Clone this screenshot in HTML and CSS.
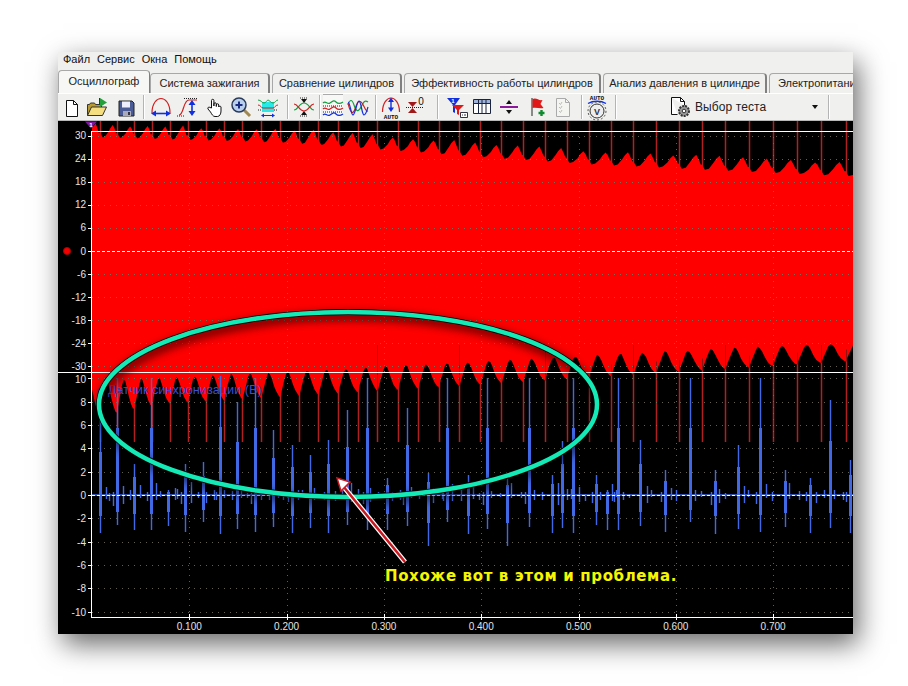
FILE: index.html
```html
<!DOCTYPE html>
<html lang="ru">
<head>
<meta charset="utf-8">
<title>Осциллограф</title>
<link rel="stylesheet" href="styles.css">
</head>
<body>
<div class="window">
  <nav class="menu"><span>Файл</span><span>Сервис</span><span>Окна</span><span>Помощь</span></nav>
  <div class="tabs">
    <div class="tab active t1">Осциллограф</div>
    <div class="tab t2">Система зажигания</div>
    <div class="tab t3">Сравнение цилиндров</div>
    <div class="tab t4">Эффективность работы цилиндров</div>
    <div class="tab t5">Анализ давления в цилиндре</div>
    <div class="tab t6">Электропитание</div>
  </div>
  <div class="toolbar">
    <div class="tool w26"><svg width="24" height="24" viewBox="0 0 24 24"><path d="M6.500 5.500h7l4 4v12h-11z" fill="#fff" stroke="#111"/><path d="M13.500 5.500v4h4" fill="none" stroke="#111"/></svg></div>
    <div class="tool w26"><svg width="28" height="24" viewBox="0 0 28 24"><path d="M3.500 20.500v-11h2l1-1.500h4l1 1.500h6v3" fill="#b89a30" stroke="#333"/><path d="M3.500 20.500l4-8.500h15l-4 8.500z" fill="#f4de80" stroke="#333"/><path d="M16 3l7 4.500-7 4.500z" fill="#22a03a"/><path d="M15.500 3v7" stroke="#333"/></svg></div>
    <div class="tool w30"><svg width="24" height="24" viewBox="0 0 24 24"><path d="M5 6h13l2 2v13H5z" fill="#4a5b96" stroke="#222"/><path d="M8 6.500h8v6H8z" fill="#eef"/><path d="M9 16h8v5H9z" fill="#aab"/><path d="M14 17h2v3h-2z" fill="#334"/></svg></div>
    <i class="sep"></i>
    <div class="tool w28"><svg width="26" height="24" viewBox="0 0 26 24"><path d="M4 18C4 8 9 3.500 13 3.500S22 8 22 18" fill="none" stroke="#d02020" stroke-width="1.200"/><path d="M7 18.500h12" stroke="#1030e0" stroke-width="1.600"/><path d="M3 18.500l5-3v6zM23 18.500l-5-3v6z" fill="#1030e0"/></svg></div>
    <div class="tool w26"><svg width="26" height="24" viewBox="0 0 26 24"><path d="M4 20c5 0 4-15 10-15h8" fill="none" stroke="#d02020" stroke-width="1.200"/><path d="M2 21h8M9 3.500h13" stroke="#222" stroke-dasharray="1 1"/><path d="M17 7v12" stroke="#1030e0" stroke-width="1.600"/><path d="M17 5l-3.500 5h7zM17 21l-3.500-5h7z" fill="#1030e0"/></svg></div>
    <div class="tool w30"><svg width="22" height="24" viewBox="0 0 22 24"><path d="M6.500 13V5.500a1.200 1.200 0 0 1 2.400 0V11V9a1.200 1.200 0 0 1 2.400 0v2.500V10a1.200 1.200 0 0 1 2.400 0v2a1.200 1.200 0 0 1 2.300 0v4c0 3-1.500 5.500-3.500 5.500H10c-2 0-3-2-4.500-4.500L3 14c-.8-1.500 1-2.500 2-1.500z" fill="#fff" stroke="#111"/></svg></div>
    <div class="tool w20"><svg width="24" height="24" viewBox="0 0 24 24"><path d="M15 15l6 6" stroke="#a08850" stroke-width="3"/><circle cx="10" cy="10" r="7" fill="#b8d0ee" stroke="#2a3a5a" stroke-width="1.500"/><path d="M6.500 10h7M10 6.500v7" stroke="#1a2a80" stroke-width="2"/></svg></div>
    <div class="tool w34"><svg width="24" height="24" viewBox="0 0 24 24"><path d="M6 7h12v10H6z" fill="#28e8e8"/><path d="M2 5c3 0 4 3 6 3s3-3 4-3 3 3 5 3 3-3 5-3" fill="none" stroke="#10a040"/><path d="M2 10c3 0 3 3 5 3h10c2 0 2-3 5-3" fill="none" stroke="#d02020"/><path d="M6 20.500h12" stroke="#1030e0"/><path d="M5 20.500l3-2v4zM19 20.500l-3-2v4z" fill="#1030e0"/><path d="M2 15h4M18 15h4" stroke="#222" stroke-dasharray="1 1"/></svg></div>
    <i class="sep"></i>
    <div class="tool w26"><svg width="24" height="24" viewBox="0 0 24 24"><path d="M2 15c4 0 5-7 10-7s6 7 10 7" fill="none" stroke="#10a040" stroke-width="1.200"/><path d="M2 9c4 0 5 7 10 7s6-7 10-7" fill="none" stroke="#d02020" stroke-width="1.200"/><path d="M12 8l-3-4h6zM12 16l-3 4h6z" fill="#111"/><path d="M8 3h8M8 21h8" stroke="#222" stroke-dasharray="1 1"/></svg></div>
    <i class="sep"></i>
    <div class="tool w20 pressed"><svg width="22" height="24" viewBox="0 0 22 24"><path d="M1 7c3-3 4 2 7 0s4-3 6-1 4 2 7 0" fill="none" stroke="#10a040" stroke-width="1.200"/><path d="M1 13c3-3 4 2 7 0s4-3 6-1 4 2 7 0" fill="none" stroke="#d02020" stroke-width="1.200"/><path d="M1 19c3-3 4 2 7 0s4-3 6-1 4 2 7 0" fill="none" stroke="#1030e0" stroke-width="1.200"/><path d="M1 10h20M1 16h20" stroke="#222" stroke-dasharray="1 1"/></svg></div>
    <div class="tool w30"><svg width="22" height="24" viewBox="0 0 22 24"><path d="M1 10c2-6 4-6 6 0s4 8 7 2 4-7 7-5" fill="none" stroke="#10a040" stroke-width="1.200"/><path d="M1 8c2 10 5 12 7 6s3-9 6-7 4 10 7 9" fill="none" stroke="#d02020" stroke-width="1.200"/><path d="M1 7c2 0 3 13 5 13s4-14 6-14 3 14 5 14 3-5 4-8" fill="none" stroke="#1030e0" stroke-width="1.200"/></svg></div>
    <i class="sep"></i>
    <div class="tool w24"><svg width="24" height="26" viewBox="0 0 24 26"><path d="M3.500 18C3.500 9 8 4 12 4s8.500 5 8.500 14" fill="none" stroke="#d02020" stroke-width="1.200"/><path d="M12 6v10" stroke="#1030e0" stroke-width="1.400"/><path d="M12 3.500l-3 4.500h6zM12 18l-3-4.500h6z" fill="#1030e0"/><text x="12" y="24.500" class="icon-text">AUTO</text></svg></div>
    <div class="tool w24"><svg width="24" height="24" viewBox="0 0 24 24"><path d="M3 12.500h18" stroke="#222" stroke-dasharray="1 1"/><path d="M5 7h9l-4.500 5z" fill="#a01818"/><path d="M5 18h9l-4.500-5z" fill="#a01818"/><text x="18" y="10" class="icon-zero">0</text></svg></div>
    <i class="sep sep-wide"></i>
    <div class="tool w32"><svg width="22" height="24" viewBox="0 0 22 24"><path d="M1 3h13l-5 7v8l-2-1v-7z" fill="#1030e0"/><path d="M6 10h12l-5 5v5l-2-1v-4z" fill="#e01818"/><text x="7" y="8" class="icon-num">1</text><path d="M14.500 17.500h7v5h-7z" fill="#fff" stroke="#334"/><path d="M16 20h1M18 20h2" stroke="#334"/></svg></div>
    <div class="tool w18"><svg width="22" height="24" viewBox="0 0 22 24"><path d="M2.500 4.500h17v14h-17z" fill="#fff" stroke="#1a2440"/><path d="M3 5h16v3H3z" fill="#9fb4dc"/><path d="M2.500 8.500h17M7.500 4.500v14M11 4.500v14M15 4.500v14" stroke="#1a2440"/></svg></div>
    <div class="tool w36"><svg width="22" height="24" viewBox="0 0 22 24"><path d="M2 12h18" stroke="#8a1a9a" stroke-width="2"/><path d="M11 5l-3 4h6zM11 19l-3-4h6z" fill="#111"/></svg></div>
    <div class="tool w20"><svg width="22" height="24" viewBox="0 0 22 24"><path d="M6 3v18" stroke="#222"/><path d="M6.500 4c4-2 6 2 10 1l-2 4 3 4c-4 1-7-1-11 0z" fill="#e01818"/><path d="M15.500 15v6M12.500 18h6" stroke="#108a30" stroke-width="2.400"/></svg></div>
    <div class="tool w32"><svg width="22" height="24" viewBox="0 0 22 24"><path d="M4.500 3.500h9l4 4v14h-13z" fill="#f4f4f0" stroke="#aaa"/><path d="M13.500 3.500v4h4" fill="none" stroke="#aaa"/><path d="M7 8l1.500 1.500L10 7M7 12l1.500 1.500L10 11M7 16l1.500 1.500L10 15" fill="none" stroke="#bbb"/></svg></div>
    <i class="sep"></i>
    <div class="tool w24"><svg width="26" height="28" viewBox="0 0 26 28"><text x="13" y="7" class="icon-text">AUTO</text><path d="M4 10.500c5-3 13-3 18 0" fill="none" stroke="#1030e0" stroke-width="1.400"/><circle cx="13" cy="18" r="7" fill="#eee" stroke="#333"/><circle cx="13" cy="18" r="9" fill="none" stroke="#555" stroke-dasharray="2 2"/><text x="13" y="21.500" class="icon-v">V</text></svg></div>
    <i class="sep sep-mid"></i>
    <div class="select">
      <svg width="24" height="24" viewBox="0 0 24 24"><path d="M2.500 2.500h9l4 4v4M2.500 2.500v17h6" fill="#fff" stroke="#111"/><path d="M11.500 2.500v4h4" fill="none" stroke="#111"/><circle cx="15" cy="16" r="5" fill="#999" stroke="#333" stroke-width="2" stroke-dasharray="2 1"/><circle cx="15" cy="16" r="1.800" fill="#fff" stroke="#333"/></svg>
      <span class="select-label">Выбор теста</span>
      <i class="caret"></i>
    </div>
    <i class="sep"></i>
  </div>
  <div class="chart" id="chart"></div>
</div>
<script src="app.js"></script>
</body>
</html>
```
FILE: styles.css
```css
* { box-sizing: border-box; }
html, body { margin: 0; height: 100%; background: #fff; }
body { padding: 52px 55px 52px 58px; overflow: hidden; font-family: "Liberation Sans", Arial, sans-serif; }
.window {
  width: 795px; height: 582px; display: flex; flex-direction: column; overflow: hidden;
  background: #f0f0ee; box-shadow: 5px 10px 26px rgba(0,0,0,.6);
}
.menu { height: 17px; flex: none; display: flex; align-items: center; gap: 7px; padding: 0 0 4px 5px; font-size: 11px; color: #111; }
.tabs { height: 24px; flex: none; display: flex; align-items: flex-end; gap: 2px; white-space: nowrap; overflow: hidden; font-size: 11px; color: #222; }
.tab {
  flex: none; height: 20px; padding-bottom: 2px; border: 1px solid #a8a8a8; border-bottom: 0; border-right: 2px solid #808080;
  border-radius: 4px 4px 0 0; display: flex; align-items: center; justify-content: center; background: #f0f0ee;
}
.tab.active { height: 23px; padding: 0 0 2px; background: #f7f7f5; border-right: 1px solid #808080; margin-right: -2px; }
.t1 { width: 92px; } .t2 { width: 120px; } .t3 { width: 130px; } .t4 { width: 197px; } .t5 { width: 164px; }
.t6 { width: 110px; justify-content: flex-start; padding-left: 8px; }
.toolbar { height: 28px; flex: none; display: flex; align-items: center; border-top: 1px solid #fff; border-bottom: 1px solid #b8b8b8; padding: 0 0 0 1px; background: #f0f0ee; }
.tool { flex: none; height: 26px; display: flex; align-items: center; justify-content: center; overflow: visible; }
.tool svg { flex: none; }
.w18 { width: 18px; } .w20 { width: 20px; } .w24 { width: 24px; } .w26 { width: 26px; } .w28 { width: 28px; }
.w30 { width: 30px; } .w32 { width: 32px; } .w34 { width: 34px; } .w36 { width: 36px; }
.pressed { border-top: 1px solid #aaa; background: #f8f8f6; }
.sep { flex: none; width: 2px; height: 24px; margin: 0 2px; border-left: 1px solid #b4b4b4; border-right: 1px solid #fff; }
.sep-wide { margin-left: 10px; }
.sep-mid { margin-left: 6px; }
.select { flex: none; width: 207px; height: 26px; display: flex; align-items: center; padding: 0 8px 0 50px; font-size: 12px; color: #222; }
.select-label { margin-left: 2px; letter-spacing: .1px; }
.caret { margin-left: auto; width: 0; height: 0; border: 3px solid transparent; border-top: 4px solid #111; border-bottom: 0; }
.chart { flex: 1; min-height: 0; background: #000; }
.chart svg { display: block; }
.icon-text { font: bold 6px "Liberation Mono", monospace; fill: #111; text-anchor: middle; }
.icon-zero { font: 10px "Liberation Sans", sans-serif; fill: #111; text-anchor: middle; }
.icon-num { font: bold 6px "Liberation Sans", sans-serif; fill: #fff; text-anchor: middle; }
.icon-v { font: bold 9px "Liberation Sans", sans-serif; fill: #334; text-anchor: middle; }
.grid { stroke: rgba(120,120,95,.8); stroke-dasharray: 1 5; fill: none; }
.spikes { stroke: #b02222; stroke-width: 1.500; fill: none; }
.spikes-dark { stroke: #8c1414; fill: none; }
.red { fill: #fe0000; }
.white { stroke: #fff; fill: none; }
.dash { stroke: #fff; stroke-dasharray: 3 2; fill: none; }
.blue { stroke: #4169e6; stroke-width: 1.400; fill: none; }
.blue-thick { stroke: #4169e6; stroke-width: 3; fill: none; }
.tick-label { font: 10px "Liberation Sans", sans-serif; fill: #e4e4e4; }
.label-y { text-anchor: end; }
.label-x { text-anchor: middle; }
.sensor { font: 12.700px "Liberation Sans", sans-serif; fill: #3a50d0; }
.oval-line { fill: none; stroke: #14eab6; stroke-width: 4.500; }
.oval-edge { fill: none; stroke: #000; stroke-width: 6; filter: drop-shadow(2px 4px 5px rgba(0,0,0,.8)); }
.arrow-w { stroke: #fff; stroke-width: 5; fill: none; }
.arrow-r { stroke: #c81820; stroke-width: 2.500; fill: none; }
.arrow-head { fill: #fff; stroke: #c81820; stroke-width: 1.500; }
.note { font: bold 15px "DejaVu Sans", sans-serif; fill: #f6f600; letter-spacing: .63px; }
.marker { fill: #7a1a9a; }
.marker-num { font: bold 6px "Liberation Sans", sans-serif; fill: #fff; text-anchor: middle; }
.dot { fill: #f40000; stroke: #a00; }
```
FILE: app.js
```js
(function () {
  var NS = 'http://www.w3.org/2000/svg';
  var svg = document.createElementNS(NS, 'svg');
  svg.setAttribute('width', 795);
  svg.setAttribute('height', 513);
  svg.setAttribute('viewBox', '58 121 795 513');
  document.getElementById('chart').appendChild(svg);

  var seed = 12345;
  function rnd() { seed = (seed * 1103515245 + 12345) & 0x7fffffff; return seed / 0x7fffffff; }
  function lerp(t, x) {
    if (x <= t[0][0]) return t[0][1];
    for (var i = 1; i < t.length; i++) {
      if (x <= t[i][0]) {
        var a = t[i - 1], b = t[i];
        return a[1] + (b[1] - a[1]) * (x - a[0]) / (b[0] - a[0]);
      }
    }
    return t[t.length - 1][1];
  }
  function add(tag, cls, attrs, text) {
    var e = document.createElementNS(NS, tag);
    if (cls) e.setAttribute('class', cls);
    for (var k in attrs) e.setAttribute(k, attrs[k]);
    if (text !== undefined) e.textContent = text;
    svg.appendChild(e);
    return e;
  }
  function path(cls, d) { return add('path', cls, { d: d }); }
  function px(v) { return Math.round(v) + .5; }

  function period(x) { return 17 + (x - 100) * 0.0105; }
  var ev = [], x = 611;
  while (x < 880) { ev.push(x); x += period(x); }
  x = 611;
  while (x > 70) { x -= period(x); ev.unshift(x); }

  var topPeak = [[92, 124], [300, 130], [500, 145], [610, 152], [850, 163]];
  var blackTop = [[100, 381], [150, 378], [368, 367], [642, 352], [853, 342]];
  var tip = [[92, 418], [150, 405], [300, 396], [430, 388], [600, 377], [853, 361]];

  // dark spikes behind the red body
  var sp = '';
  ev.forEach(function (e) { if (e >= 96 && e <= 852) sp += 'M' + px(e) + ' 121V442'; });
  path('spikes', sp);

  // red body
  var pts = [];
  ev.forEach(function (a, i) {
    var b = ev[i + 1]; if (b === undefined) return;
    var p = b - a, k = lerp(topPeak, a + p / 2), n = (rnd() - .5) * 3;
    pts.push([a, k + 8], [a + 3, k + 13], [a + .3 * p, k + 12], [a + .5 * p, k + 7 + n], [a + .62 * p, k + 3 + n], [a + .76 * p, k + n], [a + .86 * p, k + 4], [b - 1, k + 9]);
  });
  var low = [];
  ev.forEach(function (a, i) {
    var b = ev[i + 1]; if (b === undefined) return;
    var p = b - a, c = lerp(blackTop, a + p / 2), t = lerp(tip, a);
    var h = t - c;
    low.push([a, t], [a + .1 * p, c + h * .72], [a + .2 * p, c + h * .42 + rnd()],
      [a + .3 * p, c + h * .14 + rnd()], [a + .38 * p, c + rnd() * 1.500], [a + .47 * p, c + 1 + rnd() * 1.500], [a + .56 * p, c + h * .22 + rnd()],
      [a + .68 * p, c + h * .5 + rnd()], [a + .8 * p, c + h * .72 + rnd()], [a + .92 * p, c + h * .88]);
  });
  function clip(list) {
    return list.filter(function (q) { return q[0] >= 92 && q[0] <= 853; });
  }
  pts = clip(pts); low = clip(low).reverse();
  var d = 'M92 ' + pts[0][1].toFixed(1);
  pts.forEach(function (q) { d += 'L' + q[0].toFixed(1) + ' ' + q[1].toFixed(1); });
  d += 'L853 ' + pts[pts.length - 1][1].toFixed(1) + 'L853 ' + low[0][1].toFixed(1);
  low.forEach(function (q) { d += 'L' + q[0].toFixed(1) + ' ' + q[1].toFixed(1); });
  d += 'L92 418Z';
  path('red', d);

  // upward spikes over the lower red edge
  var up = '';
  ev.forEach(function (e, i) {
    if (e > 852) return;
    if (e > 340 && i % 4 === 1) up += 'M' + px(e) + ' 345V' + lerp(tip, e).toFixed(1);
    else if (e > 600) up += 'M' + px(e) + ' ' + (lerp(tip, e) - 12).toFixed(1) + 'V' + lerp(tip, e).toFixed(1);
  });
  path('spikes-dark', up);

  // grid
  var g = '', i;
  var upperY = [136, 159, 182, 205, 228, 274, 297, 320, 343, 366];
  var lowerY = [];
  for (i = -5; i <= 5; i++) if (i) lowerY.push(495 + i * 23.33);
  upperY.concat(lowerY).forEach(function (y) { g += 'M92 ' + px(y) + 'H853'; });
  var ticksX = [];
  for (i = 0; i < 7; i++) ticksX.push(189.3 + 97.3 * i);
  ticksX.forEach(function (tx) { g += 'M' + px(tx) + ' 131V617'; });
  path('grid', g);

  // blue trace: [x, top of the spike]
  var peaks = [[100, 420], [117, 378], [134, 464], [151, 378], [168, 490], [185, 464], [203, 462], [220, 376], [237, 402], [255, 378], [273, 430], [292, 445], [310, 455], [328, 440], [347, 410], [367, 378], [387, 478], [407, 408], [428, 473], [447, 378], [468, 475], [487, 378], [507, 478], [529, 378], [552, 475], [562, 441], [573, 378], [596, 475], [607, 490], [618, 378], [640, 440], [665, 470], [690, 378], [715, 470], [738, 445], [760, 378], [785, 470], [810, 478], [830, 400], [850, 460]];
  var downs = [533, 525, 530, 530, 526, 532, 522, 534, 529, 532, 527, 533, 528];
  var thin = 'M92 495H853', thick = '';
  peaks.forEach(function (q, n) {
    var bx = q[0], topY = q[1], dn = downs[n % downs.length];
    if (bx === 428 || bx === 507) dn = 546;
    thin += 'M' + px(bx) + ' ' + topY + 'V' + dn;
    thick += 'M' + px(bx) + ' ' + Math.round(topY + (495 - topY) * .43) + 'V' + Math.round(495 + (dn - 495) * .55);
    // small ripples after each main spike
    var rx = bx + 3 + rnd() * 4;
    thin += 'M' + px(rx) + ' ' + (495 - 3 - rnd() * 10).toFixed(0) + 'V' + (495 + 2 + rnd() * 7).toFixed(0);
    rx = bx + 9 + rnd() * 5;
    thin += 'M' + px(rx) + ' ' + (495 - 1 - rnd() * 5).toFixed(0) + 'V' + (495 + 2 + rnd() * 4).toFixed(0);
    if (n % 2) {
      rx = bx - 4;
      thin += 'M' + px(rx) + ' 492V' + (500 + rnd() * 6).toFixed(0);
    }
  });
  path('blue', thin);
  path('blue-thick', thick);

  // axes and rules
  path('white', 'M91 131.500H853M58 372.500H853M91.500 131V617M91 617.500H853');
  path('dash', 'M92 251.500H853M92 495.500H853');
  var tk = '';
  upperY.concat([251]).concat(lowerY).concat([495]).forEach(function (y) { tk += 'M88 ' + px(y) + 'H91'; });
  ticksX.forEach(function (tx) { tk += 'M' + px(tx) + ' 614V620'; });
  path('white', tk);

  // labels
  for (i = 0; i <= 10; i++) {
    add('text', 'tick-label label-y', { x: 86, y: 135 + i * 23.1 + 4 }, String(30 - i * 6));
    add('text', 'tick-label label-y', { x: 86, y: 378.500 + i * 23.33 + 4 }, String(10 - i * 2));
  }
  ticksX.forEach(function (tx, n) {
    add('text', 'tick-label label-x', { x: tx, y: 630 }, '0.' + (n + 1) + '00');
  });
  add('path', 'marker', { d: 'M85 121.500h12l-6 7z' });
  add('text', 'marker-num', { x: 91, y: 127 }, '1');
  add('circle', 'dot', { cx: 67, cy: 251, r: 3.500 });
  add('text', 'sensor', { x: 108, y: 394 }, 'Датчик синхронизации (В)');
  add('path', 'marker', { d: 'M97 390l5-4v8z' });

  // annotation
  add('ellipse', 'oval-edge', { cx: 348, cy: 404.500, rx: 249, ry: 92.500 });
  add('ellipse', 'oval-line', { cx: 348, cy: 404.500, rx: 249, ry: 92.500 });
  path('arrow-w', 'M405 562L343 486');
  path('arrow-r', 'M405 562L343 486');
  add('path', 'arrow-head', { d: 'M337 478L350 482L341 491Z' });
  add('text', 'note', { x: 385, y: 581 }, 'Похоже вот в этом и проблема.');
})();
```
